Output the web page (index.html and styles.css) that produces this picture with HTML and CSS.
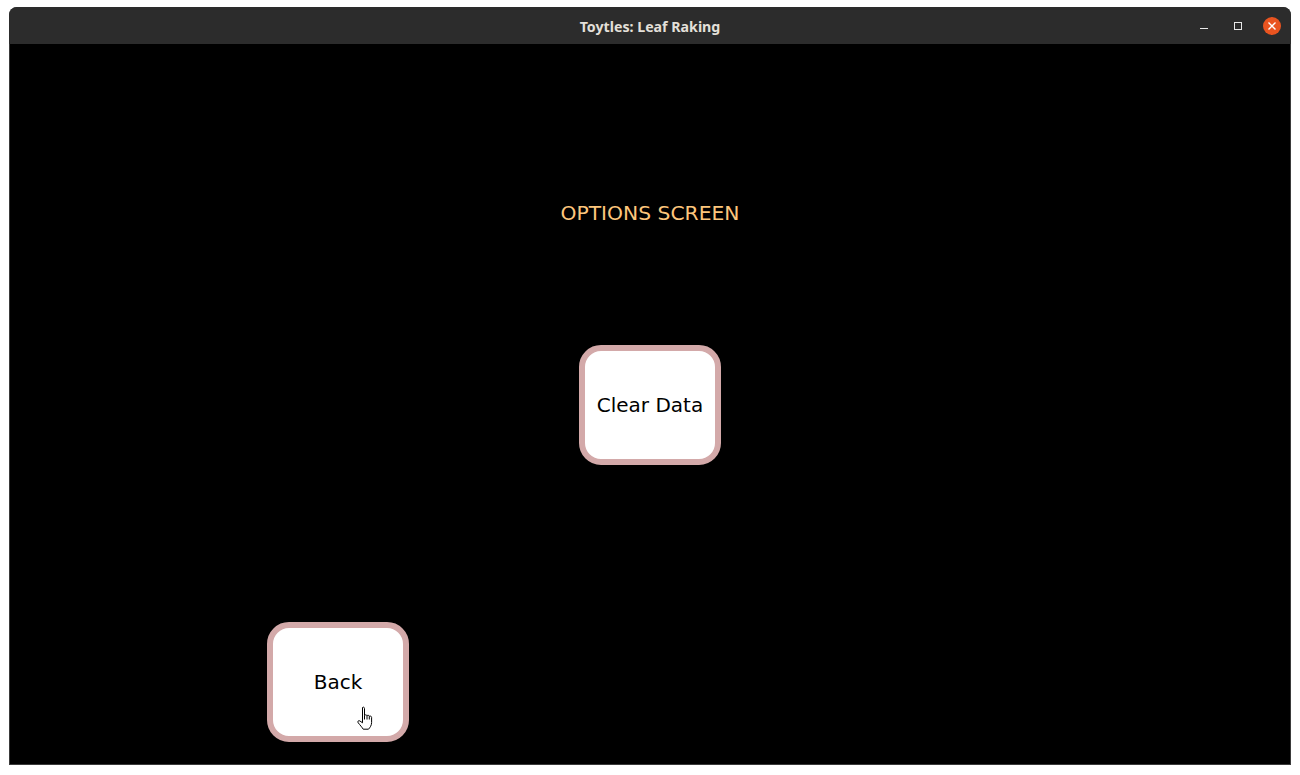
FILE: index.html
```html
<!DOCTYPE html>
<html lang="en">
<head>
    <meta charset="UTF-8">
    <title>Toytles: Leaf Raking</title>
    <link rel="stylesheet" href="styles.css">
</head>
<body>
    <div class="window">
        <div class="titlebar">
            <span class="title">Toytles: Leaf Raking</span>
            <div class="controls">
                <span class="ctl minimize"></span>
                <span class="ctl maximize"></span>
                <span class="ctl close">
                    <svg width="18" height="18" viewBox="0 0 18 18">
                        <circle cx="9" cy="9" r="9" fill="#e95420"/>
                        <path d="M5.5 5.5 L12.5 12.5 M12.5 5.5 L5.5 12.5" stroke="#fff" stroke-width="1.4"/>
                    </svg>
                </span>
            </div>
        </div>
        <div class="screen">
            <h1 class="heading">OPTIONS SCREEN</h1>
            <div class="row center">
                <button class="btn">Clear Data</button>
            </div>
            <div class="row left">
                <button class="btn back">Back
                    <svg class="cursor" width="20" height="25" viewBox="0 0 20 25">
                        <path d="M6.5 1.5 C7.3 0.8 8.5 1.2 8.5 2.5 L8.5 9.5 C9 8.6 10.8 8.6 11 9.8 C11.5 9 13.2 9.1 13.3 10.4 C13.8 9.8 15.6 10 15.6 11.4 L15.6 16.5 C15.6 19.5 14 21.5 12.5 23.2 L7.2 23.2 C6.2 21.5 4 19 2.2 16.8 C1.3 15.6 2.4 14 3.8 14.9 L6.5 16.8 Z" fill="#fff" stroke="#000" stroke-width="1" stroke-linejoin="round"/>
                        <path d="M11 9.8 L11 13.5 M13.3 10.4 L13.3 13.5 M8.5 9.5 L8.5 13.5" stroke="#000" stroke-width="1"/>
                    </svg>
                </button>
            </div>
        </div>
    </div>
</body>
</html>
```

FILE: styles.css
```css
body {
    margin: 0;
    background-color: #ffffff;
    font-family: "DejaVu Sans", sans-serif;
}
.window {
    margin: 7px 0 0 9px;
    width: 1282px;
    height: 758px;
    display: flex;
    flex-direction: column;
    border-radius: 8px 8px 0 0;
    overflow: hidden;
    background-color: #3a3a3a;
}
.titlebar {
    height: 37px;
    flex: none;
    background-color: #2c2c2c;
    position: relative;
    display: flex;
    align-items: center;
    justify-content: center;
}
.title {
    font-family: "Noto Sans", "Liberation Sans", sans-serif;
    font-weight: bold;
    font-size: 14.2px;
    color: #e4e0da;
    margin-top: 1px;
}
.controls {
    position: absolute;
    right: 10px;
    top: 0;
    display: flex;
    align-items: flex-start;
}
.ctl {
    display: block;
}
.minimize {
    width: 8px;
    height: 1px;
    margin-top: 21px;
    margin-right: 26px;
    background-color: #e8e8e8;
}
.maximize {
    width: 6px;
    height: 6px;
    margin-top: 15px;
    border: 1px solid #e8e8e8;
    margin-right: 21px;
}
.close {
    width: 18px;
    height: 18px;
    margin-top: 10px;
}
.close svg {
    display: block;
}
.screen {
    flex: 1;
    margin: 0 1px 1px 1px;
    background-color: #000000;
    display: flex;
    flex-direction: column;
}
.heading {
    margin: 157px 0 0 0;
    font-size: 20.3px;
    line-height: 24px;
    font-weight: normal;
    color: #fdc67c;
    text-align: center;
}
.row {
    display: flex;
}
.row.center {
    justify-content: center;
    margin-top: 120px;
}
.row.left {
    padding-left: 257px;
    margin-top: 157px;
}
.btn {
    box-sizing: border-box;
    width: 142px;
    height: 120px;
    border: 6px solid #d3a9a9;
    border-radius: 22px;
    background-color: #ffffff;
    font-family: "DejaVu Sans", sans-serif;
    font-size: 20px;
    color: #000000;
    padding: 0;
    position: relative;
}
.cursor {
    position: absolute;
    left: 83px;
    top: 78px;
}
```
